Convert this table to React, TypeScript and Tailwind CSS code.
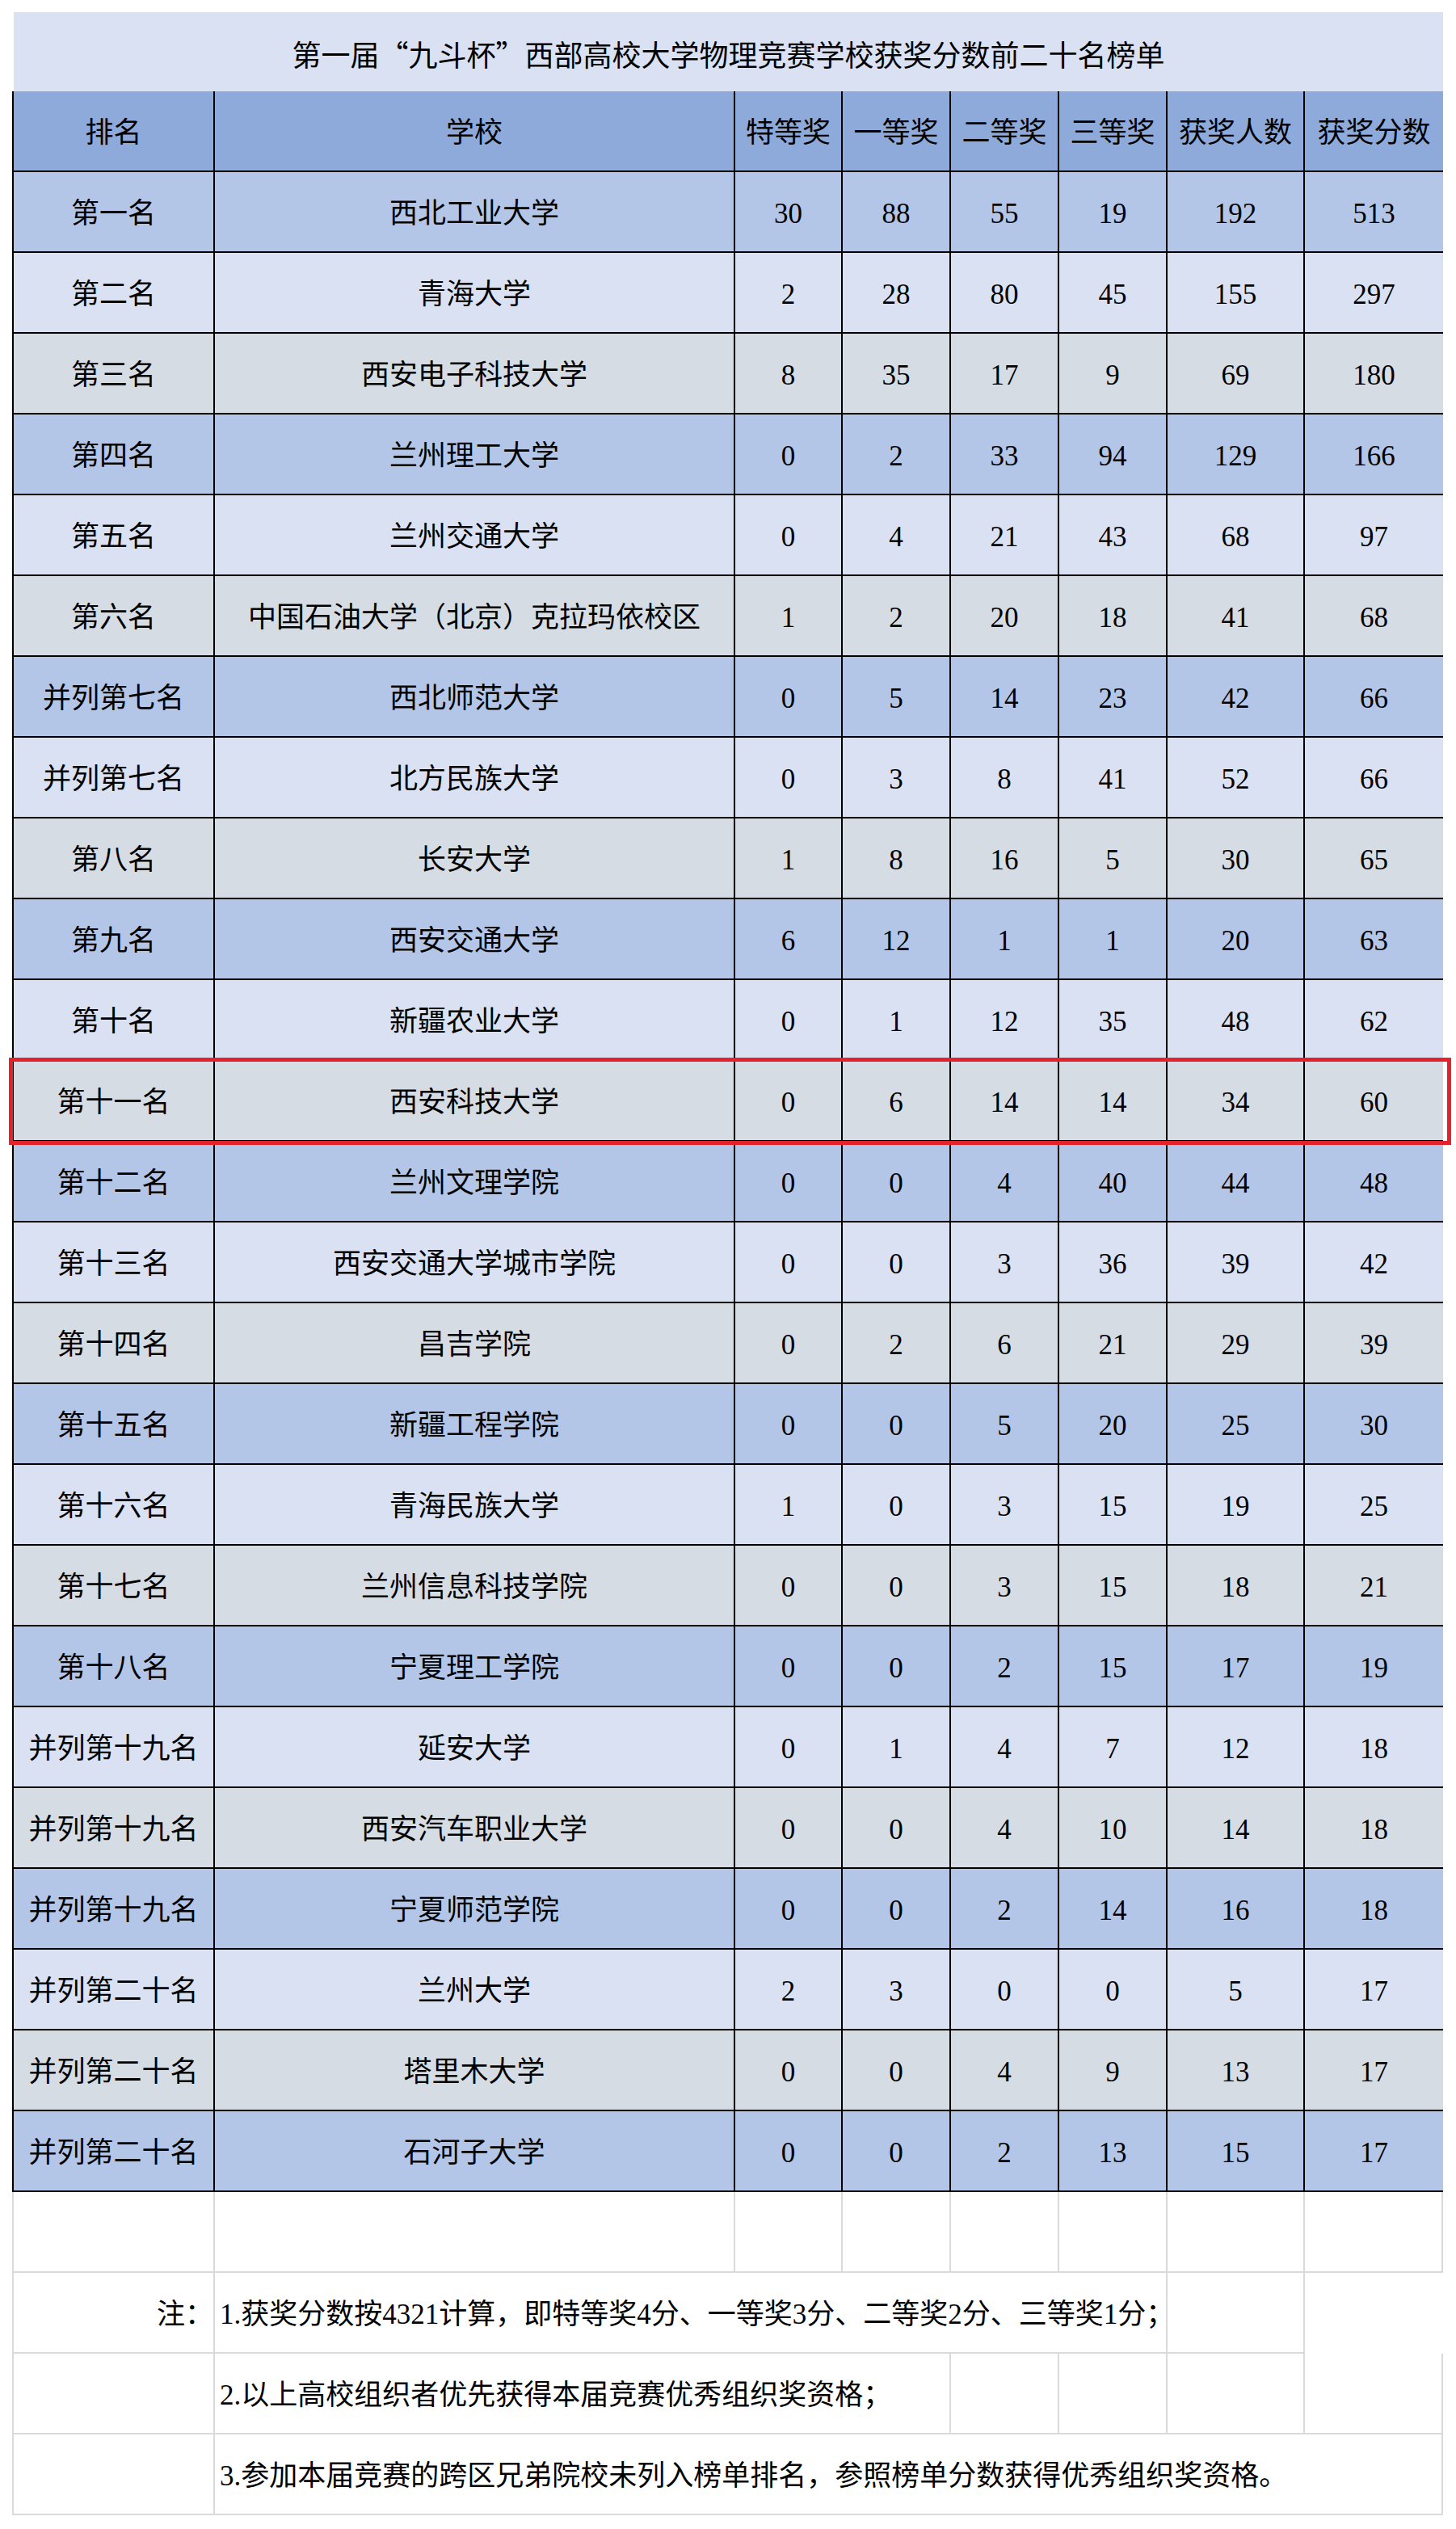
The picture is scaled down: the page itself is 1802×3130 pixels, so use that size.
import React from 'react';

type RowData = [string, string, number, number, number, number, number, number];

const rows: RowData[] = [
  ['第一名', '西北工业大学', 30, 88, 55, 19, 192, 513],
  ['第二名', '青海大学', 2, 28, 80, 45, 155, 297],
  ['第三名', '西安电子科技大学', 8, 35, 17, 9, 69, 180],
  ['第四名', '兰州理工大学', 0, 2, 33, 94, 129, 166],
  ['第五名', '兰州交通大学', 0, 4, 21, 43, 68, 97],
  ['第六名', '中国石油大学（北京）克拉玛依校区', 1, 2, 20, 18, 41, 68],
  ['并列第七名', '西北师范大学', 0, 5, 14, 23, 42, 66],
  ['并列第七名', '北方民族大学', 0, 3, 8, 41, 52, 66],
  ['第八名', '长安大学', 1, 8, 16, 5, 30, 65],
  ['第九名', '西安交通大学', 6, 12, 1, 1, 20, 63],
  ['第十名', '新疆农业大学', 0, 1, 12, 35, 48, 62],
  ['第十一名', '西安科技大学', 0, 6, 14, 14, 34, 60],
  ['第十二名', '兰州文理学院', 0, 0, 4, 40, 44, 48],
  ['第十三名', '西安交通大学城市学院', 0, 0, 3, 36, 39, 42],
  ['第十四名', '昌吉学院', 0, 2, 6, 21, 29, 39],
  ['第十五名', '新疆工程学院', 0, 0, 5, 20, 25, 30],
  ['第十六名', '青海民族大学', 1, 0, 3, 15, 19, 25],
  ['第十七名', '兰州信息科技学院', 0, 0, 3, 15, 18, 21],
  ['第十八名', '宁夏理工学院', 0, 0, 2, 15, 17, 19],
  ['并列第十九名', '延安大学', 0, 1, 4, 7, 12, 18],
  ['并列第十九名', '西安汽车职业大学', 0, 0, 4, 10, 14, 18],
  ['并列第十九名', '宁夏师范学院', 0, 0, 2, 14, 16, 18],
  ['并列第二十名', '兰州大学', 2, 3, 0, 0, 5, 17],
  ['并列第二十名', '塔里木大学', 0, 0, 4, 9, 13, 17],
  ['并列第二十名', '石河子大学', 0, 0, 2, 13, 15, 17],
];

const headers = ['排名', '学校', '特等奖', '一等奖', '二等奖', '三等奖', '获奖人数', '获奖分数'];

// 3 种底色轮流
const bgs = ['bg-[#b4c6e7]', 'bg-[#d9e1f2]', 'bg-[#d6dce4]'];

const grid = 'grid grid-cols-[251px_644px_133px_134px_134px_134px_170px_171px] w-[1771px] h-[100px]';

function Cells({ values }: { values: (string | number)[] }) {
  return (
    <>
      {values.map((v, i) => (
        <div
          key={i}
          className={
            'flex items-center justify-center pt-[4px] border-b-2 border-black ' +
            (i === 0 ? 'border-l-2 ' : '') +
            (i < 7 ? 'border-r-2' : '')
          }
        >
          {v}
        </div>
      ))}
    </>
  );
}

export default function App() {
  return (
    <div
      className="w-[1802px] min-h-[3130px] bg-white pt-[15px] pl-[15px] text-[35px] leading-none text-black"
      style={{ fontFamily: '"Liberation Serif", "Noto Sans CJK SC", serif' }}
    >
      {/* 标题 */}
      <div
        className="ml-[2px] w-[1769px] h-[98px] bg-[#d9e1f2] flex items-center justify-center pt-[4px] text-[36px]"
        style={{ fontFamily: '"Noto Sans CJK SC", serif' }}
      >
        第一届“九斗杯”西部高校大学物理竞赛学校获奖分数前二十名榜单
      </div>

      {/* 表头 */}
      <div className={grid + ' bg-[#8eaadb]'}>
        <Cells values={headers} />
      </div>

      {rows.map((r, idx) => (
        <div key={idx} className={grid + ' relative ' + bgs[idx % 3]}>
          <Cells values={r} />
          {r[0] === '第十一名' && (
            <div className="absolute z-10 -left-[4px] -top-[4px] -right-[10px] -bottom-[4px] border-[5px] border-[#e3222b]" />
          )}
        </div>
      ))}

      {/* 空行 */}
      <div className={grid}>
        {Array.from({ length: 8 }).map((_, i) => (
          <div
            key={i}
            className={'border-r-2 border-b-2 border-[#dadada] ' + (i === 0 ? 'border-l-2' : '')}
          />
        ))}
      </div>

      {/* 注 */}
      <div className={grid}>
        <div className="flex items-center justify-end pt-[4px] border-l-2 border-r-2 border-b-2 border-[#dadada]">
          注：
        </div>
        <div className="col-span-5 flex items-center pl-[6px] pt-[4px] whitespace-nowrap border-r-2 border-b-2 border-[#dadada]">
          1.获奖分数按4321计算，即特等奖4分、一等奖3分、二等奖2分、三等奖1分；
        </div>
        <div className="border-r-2 border-b-2 border-[#dadada]" />
      </div>

      <div className={grid}>
        <div className="border-l-2 border-r-2 border-b-2 border-[#dadada]" />
        <div className="col-span-3 flex items-center pl-[6px] pt-[4px] whitespace-nowrap border-r-2 border-b-2 border-[#dadada]">
          2.以上高校组织者优先获得本届竞赛优秀组织奖资格；
        </div>
        <div className="border-r-2 border-b-2 border-[#dadada]" />
        <div className="border-r-2 border-b-2 border-[#dadada]" />
        <div className="border-r-2 border-b-2 border-[#dadada]" />
        <div className="border-r-2 border-b-2 border-[#dadada]" />
      </div>

      <div className={grid}>
        <div className="border-l-2 border-r-2 border-b-2 border-[#dadada]" />
        <div className="col-span-7 flex items-center pl-[6px] pt-[4px] whitespace-nowrap border-r-2 border-b-2 border-[#dadada]">
          3.参加本届竞赛的跨区兄弟院校未列入榜单排名，参照榜单分数获得优秀组织奖资格。
        </div>
      </div>
    </div>
  );
}
